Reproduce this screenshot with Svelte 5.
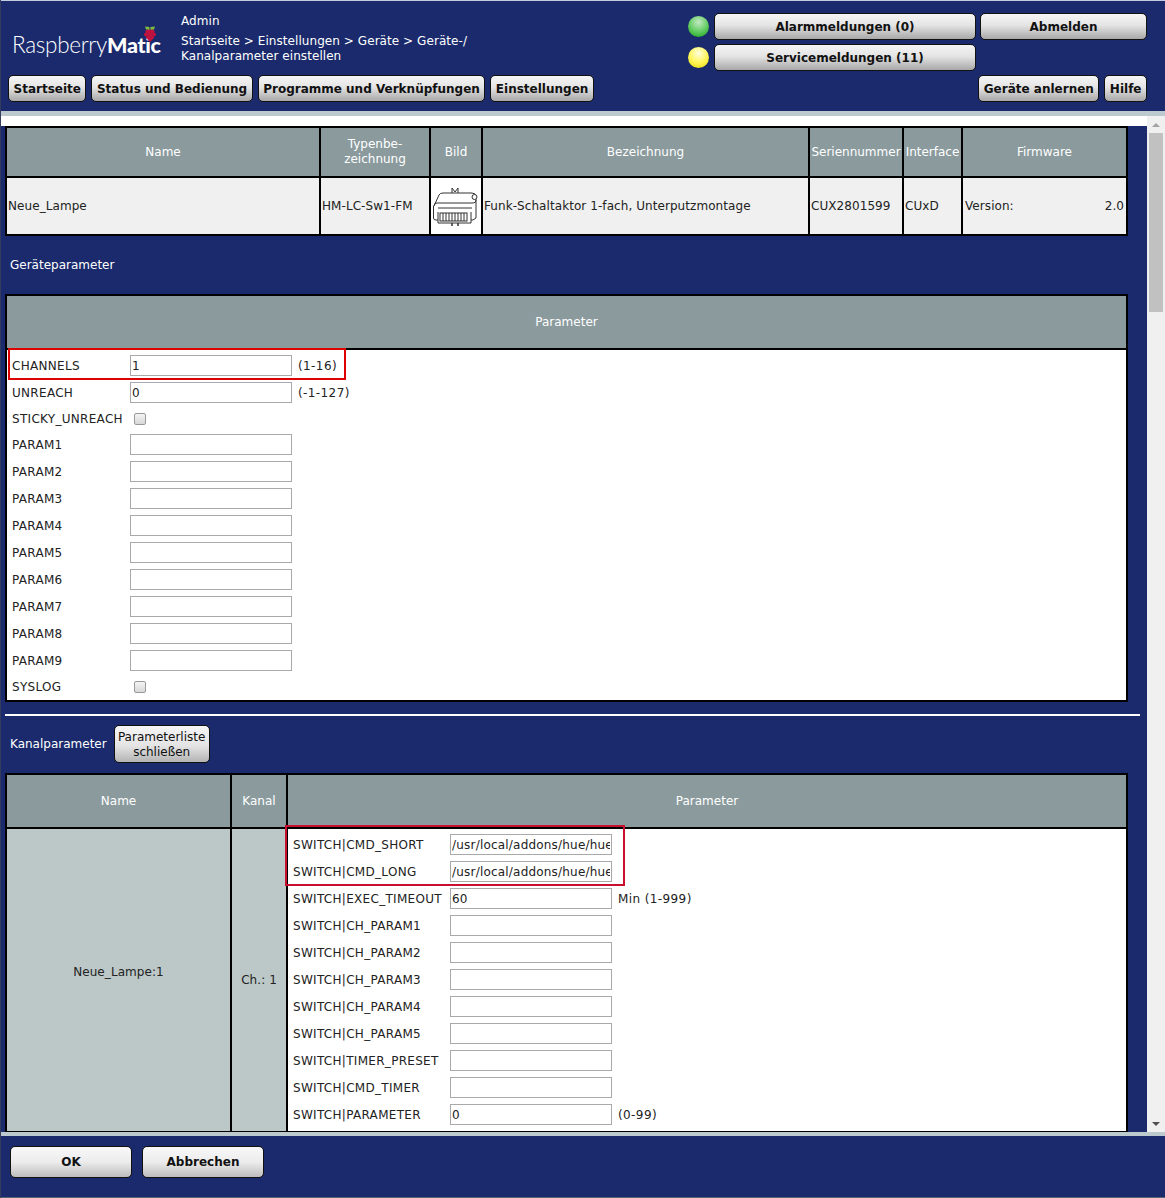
<script>
  const deviceParams = [
    { label: 'UNREACH', value: '0', note: '(-1-127)' },
    { label: 'STICKY_UNREACH', check: true },
    { label: 'PARAM1' },
    { label: 'PARAM2' },
    { label: 'PARAM3' },
    { label: 'PARAM4' },
    { label: 'PARAM5' },
    { label: 'PARAM6' },
    { label: 'PARAM7' },
    { label: 'PARAM8' },
    { label: 'PARAM9' },
    { label: 'SYSLOG', check: true }
  ];

  const channelParams = [
    { label: 'SWITCH|EXEC_TIMEOUT', value: '60', note: 'Min (1-999)' },
    { label: 'SWITCH|CH_PARAM1' },
    { label: 'SWITCH|CH_PARAM2' },
    { label: 'SWITCH|CH_PARAM3' },
    { label: 'SWITCH|CH_PARAM4' },
    { label: 'SWITCH|CH_PARAM5' },
    { label: 'SWITCH|TIMER_PRESET' },
    { label: 'SWITCH|CMD_TIMER' },
    { label: 'SWITCH|PARAMETER', value: '0', note: '(0-99)' }
  ];

  const hueCmd = '/usr/local/addons/hue/hue.tcl 1 light 1 on';
</script>

<div class="page">
  <header class="header">
    <div class="top">
      <div class="logo">
        <span class="logo-text">Raspberry<b>Matic</b></span>
        <svg class="berry" viewBox="0 0 14 17" width="14" height="17" aria-hidden="true">
          <path d="M2 1.5 L6.5 2 L6.5 5 L3 4.5 Z M12 1.5 L7.5 2 L7.5 5 L11 4.5 Z" fill="#7fbf3f" />
          <g fill="#c2123f">
            <circle cx="4.5" cy="6.5" r="2" />
            <circle cx="9.5" cy="6.5" r="2" />
            <circle cx="7" cy="6.5" r="2" />
            <circle cx="3" cy="9.5" r="2" />
            <circle cx="7" cy="9.5" r="2.2" />
            <circle cx="11" cy="9.5" r="2" />
            <circle cx="5" cy="12.5" r="2" />
            <circle cx="9" cy="12.5" r="2" />
            <circle cx="7" cy="14.5" r="2" />
          </g>
        </svg>
      </div>
      <div class="crumbs">
        <div class="user">Admin</div>
        <div class="path">Startseite &gt; Einstellungen &gt; Geräte &gt; Geräte-/ Kanalparameter einstellen</div>
      </div>
      <div class="alarms">
        <span class="led green"></span>
        <button class="btn">Alarmmeldungen (0)</button>
        <button class="btn">Abmelden</button>
        <span class="led yellow"></span>
        <button class="btn">Servicemeldungen (11)</button>
      </div>
    </div>
    <nav class="nav">
      <div class="nav-group">
        <button class="btn">Startseite</button>
        <button class="btn">Status und Bedienung</button>
        <button class="btn">Programme und Verknüpfungen</button>
        <button class="btn">Einstellungen</button>
      </div>
      <div class="nav-group">
        <button class="btn">Geräte anlernen</button>
        <button class="btn">Hilfe</button>
      </div>
    </nav>
  </header>

  <div class="strip"></div>

  <div class="middle">
    <main class="content">
      <div class="white-gap"></div>

      <div class="tbl device-tbl">
        <div class="th">Name</div>
        <div class="th">Typenbe-<br />zeichnung</div>
        <div class="th">Bild</div>
        <div class="th">Bezeichnung</div>
        <div class="th">Seriennummer</div>
        <div class="th">Interface</div>
        <div class="th">Firmware</div>
        <div class="td">Neue_Lampe</div>
        <div class="td">HM-LC-Sw1-FM</div>
        <div class="td pic">
          <svg viewBox="0 0 46 42" width="46" height="42" fill="none" stroke="#333" stroke-width="1" aria-hidden="true">
            <path d="M20 3 V8 M26 3 V8 M20 3 L23 7 L26 3" />
            <path d="M2 21 L7 10 Q8 8 11 8 H40 Q44 8 44 12 V17" />
            <path d="M2 21 Q2 18 5 18 H41 Q44 18 44 15" />
            <circle cx="42.5" cy="12" r="2.5" fill="#fff" />
            <path d="M1.5 21 V33 Q1.500 35 4 35 H6 V38 H39 V35 H41 L44 33 V17" />
            <path d="M6 23 H40 M6 27 V35 M39 27 V35" />
            <rect x="8" y="28" width="27" height="8" />
            <path d="M11 28 V36 M14 28 V36 M17 28 V36 M20 28 V36 M23 28 V36 M26 28 V36 M29 28 V36 M32 28 V36" />
            <path d="M20 38 V41 M26 38 V41" stroke-width="1.500" />
          </svg>
        </div>
        <div class="td">Funk-Schaltaktor 1-fach, Unterputzmontage</div>
        <div class="td">CUX2801599</div>
        <div class="td">CUxD</div>
        <div class="td firmware"><span>Version:</span><span>2.0</span></div>
      </div>

      <div class="section-label">Geräteparameter</div>

      <div class="tbl param-tbl">
        <div class="th">Parameter</div>
        <div class="params">
          <div class="mark mark-device">
            <div class="row">
              <span>CHANNELS</span>
              <input value="1" />
              <span class="note">(1-16)</span>
            </div>
          </div>
          {#each deviceParams as p}
            <div class="row" class:check-row={p.check}>
              <span>{p.label}</span>
              {#if p.check}
                <input class="box" type="checkbox" />
              {:else}
                <input value={p.value ?? ''} />
              {/if}
              {#if p.note}<span class="note">{p.note}</span>{/if}
            </div>
          {/each}
        </div>
      </div>

      <hr class="divider" />

      <div class="channel-head">
        <span>Kanalparameter</span>
        <button class="btn plain">Parameterliste<br />schließen</button>
      </div>

      <div class="tbl channel-tbl">
        <div class="th">Name</div>
        <div class="th">Kanal</div>
        <div class="th">Parameter</div>
        <div class="td tint center name-cell">Neue_Lampe:1</div>
        <div class="td tint center">Ch.: 1</div>
        <div class="params wide">
          <div class="mark mark-channel">
            <div class="row wide-row">
              <span>SWITCH|CMD_SHORT</span>
              <input value={hueCmd} />
            </div>
            <div class="row wide-row">
              <span>SWITCH|CMD_LONG</span>
              <input value={hueCmd} />
            </div>
          </div>
          {#each channelParams as p}
            <div class="row wide-row">
              <span>{p.label}</span>
              <input value={p.value ?? ''} />
              {#if p.note}<span class="note">{p.note}</span>{/if}
            </div>
          {/each}
        </div>
      </div>
    </main>

    <div class="scrollbar">
      <span class="arrow up"></span>
      <div class="track"><div class="thumb"></div></div>
      <span class="arrow down"></span>
    </div>
  </div>

  <div class="strip foot-strip"></div>

  <footer class="footer">
    <button class="btn foot-btn">OK</button>
    <button class="btn foot-btn">Abbrechen</button>
  </footer>
</div>

<style>
  :global(body) {
    background: #1a2a6c;
  }

  .page {
    width: 1165px;
    height: 1198px;
    display: flex;
    flex-direction: column;
    overflow: hidden;
    background: #1a2a6c;
    font-family: "DejaVu Sans", Verdana, sans-serif;
    font-size: 12px;
    color: #222;
    border-left: 1px solid #333c5c;
    box-sizing: border-box;
  }

  .header {
    height: 111px;
    flex: none;
    box-sizing: border-box;
    border-top: 1px solid #c3cbe0;
    color: #fff;
  }

  .top {
    height: 74px;
    display: flex;
  }

  .logo {
    position: relative;
    width: 169px;
    margin-left: 11px;
    padding-top: 31px;
    box-sizing: border-box;
  }

  .logo-text {
    font-family: Lato, "Open Sans", sans-serif;
    font-weight: 300;
    font-size: 22.5px;
    line-height: 26px;
    letter-spacing: -0.3px;
    color: #fff;
  }

  .logo-text b {
    font-weight: 900;
    font-size: 21.5px;
  }

  .berry {
    position: absolute;
    left: 131px;
    top: 24px;
  }

  .crumbs {
    width: 300px;
    line-height: 15px;
    padding-top: 13px;
    letter-spacing: 0.06px;
  }

  .user {
    margin-bottom: 5px;
  }

  .alarms {
    margin-left: auto;
    margin-right: 18px;
    padding-top: 12px;
    display: grid;
    grid-template-columns: 21px 262px 167px;
    grid-auto-rows: 27px;
    column-gap: 4px;
    row-gap: 4px;
    align-items: center;
  }

  .led {
    width: 21px;
    height: 21px;
    border-radius: 50%;
    margin-left: -1px;
  }

  .green {
    background: radial-gradient(circle at 50% 30%, #c4e8c4 0%, #6fd06f 45%, #12a012 100%);
  }

  .yellow {
    margin-top: -1px;
    background: radial-gradient(circle at 50% 30%, #fffde0 0%, #fff65c 50%, #e6d800 100%);
  }

  .btn {
    height: 27px;
    padding: 0 4.5px;
    box-sizing: border-box;
    border: 1px solid #111;
    border-radius: 5px;
    background: linear-gradient(#f5f5f5, #e4e4e4 45%, #a8a8a8);
    font-family: "DejaVu Sans", Verdana, sans-serif;
    font-weight: bold;
    font-size: 12px;
    color: #111;
    white-space: nowrap;
  }

  .nav {
    display: flex;
    justify-content: space-between;
    padding: 0 18px 0 7px;
  }

  .nav-group {
    display: flex;
    gap: 5px;
  }

  .strip {
    height: 5px;
    flex: none;
    background: #bcc9cf;
  }

  .middle {
    height: 1016px;
    flex: none;
    display: flex;
    overflow: hidden;
  }

  .content {
    width: 1146px;
    flex: none;
  }

  .white-gap {
    height: 10px;
    background: #fff;
  }

  .tbl {
    display: grid;
    width: 1123px;
    margin-left: 4px;
    box-sizing: border-box;
    background: #000;
    gap: 2px;
    padding: 2px;
  }

  .device-tbl {
    grid-template-columns: 312px 108px 50px 325px 92px 57px 163px;
    grid-template-rows: 48px 56px;
  }

  .param-tbl {
    grid-template-rows: 52px 1fr;
  }

  .channel-tbl {
    grid-template-columns: 223px 54px 1fr;
    grid-template-rows: 52px 302px;
  }

  .th {
    display: flex;
    align-items: center;
    justify-content: center;
    text-align: center;
    background: #8a9a9d;
    color: #fff;
    line-height: 15px;
    white-space: nowrap;
  }

  .td {
    display: flex;
    align-items: center;
    padding-left: 1px;
    background: #f0f0f0;
    white-space: nowrap;
    letter-spacing: 0.07px;
  }

  .pic {
    background: #fff;
    justify-content: center;
    padding: 0 3px 0 0;
  }

  .firmware {
    justify-content: space-between;
    padding: 0 2px;
  }

  .tint {
    background: #bcc8c8;
  }

  .center {
    justify-content: center;
    padding: 0;
  }

  .name-cell {
    padding-bottom: 16px;
  }

  .section-label {
    height: 58px;
    display: flex;
    align-items: center;
    padding-left: 9px;
    color: #fff;
  }

  .params {
    background: #fff;
    padding: 5px 0 4px 5px;
    display: flex;
    flex-direction: column;
    gap: 6px;
  }

  .row {
    display: grid;
    grid-template-columns: 118px 162px auto;
    align-items: center;
    justify-content: start;
    min-height: 21px;
  }

  .row > span {
    letter-spacing: 0.3px;
    white-space: nowrap;
  }

  .wide-row {
    grid-template-columns: 157px 162px auto;
  }

  .check-row {
    min-height: 19px;
  }

  .row input:not(.box) {
    width: 162px;
    height: 21px;
    box-sizing: border-box;
    border: 1px solid #a9a9a9;
    padding: 0 1px;
    margin: 0;
    font: 12px "DejaVu Sans", Verdana, sans-serif;
    letter-spacing: 0.2px;
    color: #222;
    background: #fff;
  }

  .box {
    appearance: none;
    width: 12px;
    height: 12px;
    margin: 0 0 0 4px;
    border: 1px solid #999;
    border-radius: 2px;
    background: linear-gradient(#f4f4f4, #d8d8d8);
  }

  .row > .note {
    margin-left: 6px;
    letter-spacing: 0.4px;
  }

  .mark {
    position: relative;
    display: flex;
    flex-direction: column;
    gap: 6px;
  }

  .mark::after {
    content: "";
    position: absolute;
    border: 2px solid #dd0000;
    pointer-events: none;
  }

  .mark-device {
    width: 334px;
  }

  .mark-device::after {
    inset: -7px 0 -4px -4px;
  }

  .mark-channel {
    width: 319px;
  }

  .mark-channel::after {
    inset: -9px -13px -4px -8px;
    border-color: #c8102e;
  }

  .divider {
    height: 2px;
    width: 1135px;
    margin: 12px 0 0 4px;
    border: 0;
    background: #fff;
  }

  .channel-head {
    height: 57px;
    box-sizing: border-box;
    display: flex;
    align-items: center;
    gap: 7px;
    padding: 0 0 2px 9px;
    color: #fff;
  }

  .plain {
    height: 38px;
    width: 96px;
    padding: 2px 0 0;
    font-weight: normal;
    font-size: 12px;
    line-height: 15px;
    margin-top: 1px;
    background: linear-gradient(#f5f5f5, #e4e4e4 55%, #b4b4b4);
  }

  .scrollbar {
    width: 18px;
    flex: none;
    background: #f0f0f0;
    display: flex;
    flex-direction: column;
    align-items: center;
  }

  .arrow {
    width: 0;
    height: 0;
    flex: none;
    border-left: 4px solid transparent;
    border-right: 4px solid transparent;
  }

  .up {
    margin: 7px 0 6px;
    border-bottom: 4px solid #a3a3a3;
  }

  .down {
    margin: 6px 0 6px;
    border-top: 4px solid #505050;
  }

  .track {
    flex: 1;
    width: 100%;
  }

  .thumb {
    width: 14px;
    height: 179px;
    margin: 0 auto;
    background: #c1c1c1;
  }

  .foot-strip {
    height: 4px;
  }

  .footer {
    flex: 1;
    display: flex;
    gap: 10px;
    padding: 10px 0 0 9px;
    border-bottom: 1px solid #5a6478;
  }

  .foot-btn {
    width: 122px;
    height: 32px;
    padding-bottom: 1px;
    background: linear-gradient(#f8f8f8, #ececec 50%, #bdbdbd);
  }
</style>
